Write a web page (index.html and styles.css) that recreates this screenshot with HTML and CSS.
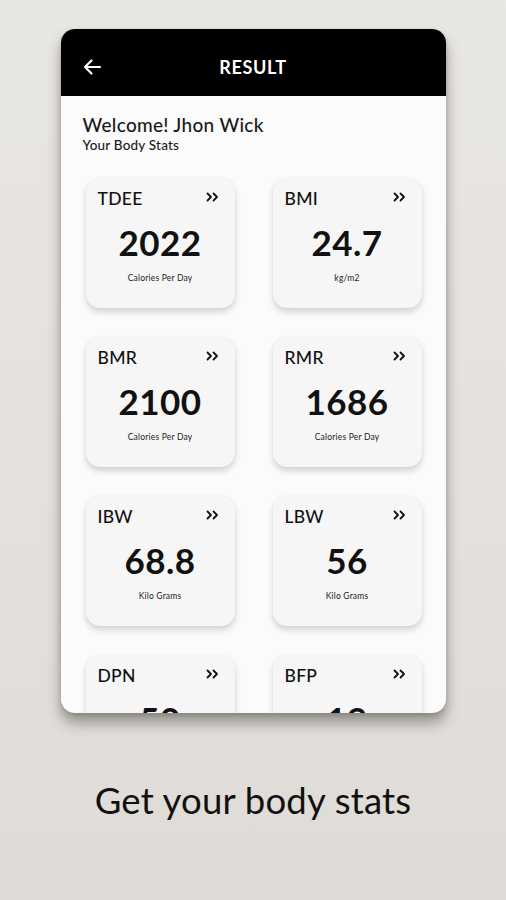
FILE: index.html
```html
<!DOCTYPE html>
<html lang="en">
<head>
<meta charset="utf-8">
<title>Result</title>
<link rel="stylesheet" href="styles.css">
</head>
<body>
<div class="screen">
  <div class="phone">
    <header class="appbar">
      <svg class="back" width="20" height="18" viewBox="0 0 20 18"><path d="M18 9H3M9.5 2.5L3 9l6.5 6.5" fill="none" stroke="#fff" stroke-width="2.2" stroke-linecap="round" stroke-linejoin="round"/></svg>
      <span class="title">RESULT</span>
    </header>
    <main class="content">
      <h1 class="welcome">Welcome! Jhon Wick</h1>
      <p class="sub">Your Body Stats</p>
      <div class="grid">
        <div class="card"><div class="top"><span class="lbl">TDEE</span><svg class="chev" width="13" height="10" viewBox="0 0 13 10"><path d="M1.5 1.5L5 5 1.5 8.5M7.5 1.5L11 5 7.5 8.5" fill="none" stroke="#111" stroke-width="1.8" stroke-linecap="round" stroke-linejoin="round"/></svg></div><div class="val">2022</div><div class="unit">Calories Per Day</div></div>
        <div class="card"><div class="top"><span class="lbl">BMI</span><svg class="chev" width="13" height="10" viewBox="0 0 13 10"><path d="M1.5 1.5L5 5 1.5 8.5M7.5 1.5L11 5 7.5 8.5" fill="none" stroke="#111" stroke-width="1.8" stroke-linecap="round" stroke-linejoin="round"/></svg></div><div class="val">24.7</div><div class="unit">kg/m2</div></div>
        <div class="card"><div class="top"><span class="lbl">BMR</span><svg class="chev" width="13" height="10" viewBox="0 0 13 10"><path d="M1.5 1.5L5 5 1.5 8.5M7.5 1.5L11 5 7.5 8.5" fill="none" stroke="#111" stroke-width="1.8" stroke-linecap="round" stroke-linejoin="round"/></svg></div><div class="val">2100</div><div class="unit">Calories Per Day</div></div>
        <div class="card"><div class="top"><span class="lbl">RMR</span><svg class="chev" width="13" height="10" viewBox="0 0 13 10"><path d="M1.5 1.5L5 5 1.5 8.5M7.5 1.5L11 5 7.5 8.5" fill="none" stroke="#111" stroke-width="1.8" stroke-linecap="round" stroke-linejoin="round"/></svg></div><div class="val">1686</div><div class="unit">Calories Per Day</div></div>
        <div class="card"><div class="top"><span class="lbl">IBW</span><svg class="chev" width="13" height="10" viewBox="0 0 13 10"><path d="M1.5 1.5L5 5 1.5 8.5M7.5 1.5L11 5 7.5 8.5" fill="none" stroke="#111" stroke-width="1.8" stroke-linecap="round" stroke-linejoin="round"/></svg></div><div class="val">68.8</div><div class="unit">Kilo Grams</div></div>
        <div class="card"><div class="top"><span class="lbl">LBW</span><svg class="chev" width="13" height="10" viewBox="0 0 13 10"><path d="M1.5 1.5L5 5 1.5 8.5M7.5 1.5L11 5 7.5 8.5" fill="none" stroke="#111" stroke-width="1.8" stroke-linecap="round" stroke-linejoin="round"/></svg></div><div class="val">56</div><div class="unit">Kilo Grams</div></div>
        <div class="card"><div class="top"><span class="lbl">DPN</span><svg class="chev" width="13" height="10" viewBox="0 0 13 10"><path d="M1.5 1.5L5 5 1.5 8.5M7.5 1.5L11 5 7.5 8.5" fill="none" stroke="#111" stroke-width="1.8" stroke-linecap="round" stroke-linejoin="round"/></svg></div><div class="val">50</div><div class="unit">Percent</div></div>
        <div class="card"><div class="top"><span class="lbl">BFP</span><svg class="chev" width="13" height="10" viewBox="0 0 13 10"><path d="M1.5 1.5L5 5 1.5 8.5M7.5 1.5L11 5 7.5 8.5" fill="none" stroke="#111" stroke-width="1.8" stroke-linecap="round" stroke-linejoin="round"/></svg></div><div class="val">19</div><div class="unit">Percent</div></div>
      </div>
    </main>
  </div>
  <p class="caption">Get your body stats</p>
</div>
</body>
</html>
```

FILE: styles.css
```css
* { box-sizing: border-box; }
html, body { margin: 0; padding: 0; }
body {
  width: 506px;
  height: 900px;
  overflow: hidden;
  background: linear-gradient(180deg, #e9e7e3 0%, #e4e1dd 60%, #dfdbd6 100%);
  font-family: Lato, "Open Sans", sans-serif;
  color: #111;
}
.screen {
  display: flex;
  flex-direction: column;
  align-items: center;
  padding-top: 29px;
}
.phone {
  width: 385px;
  height: 684px;
  border-radius: 14px;
  overflow: hidden;
  background: #fbfbfb;
  box-shadow: 0 10px 14px rgba(60, 55, 50, 0.45), 0 2px 4px rgba(0,0,0,0.15);
  display: flex;
  flex-direction: column;
}
.appbar {
  height: 67px;
  flex: none;
  background: #000;
  display: flex;
  align-items: center;
  position: relative;
  padding: 8px 0 0 21px;
}
.back { display: block; margin-top: 0; }
.title {
  position: absolute;
  left: 0;
  right: 0;
  top: 8px;
  bottom: 0;
  display: flex;
  align-items: center;
  justify-content: center;
  color: #fff;
  font-weight: 700;
  font-size: 18px;
  letter-spacing: 0.6px;
  pointer-events: none;
}
.content {
  flex: 1;
  overflow: hidden;
  padding: 18px 0 0 22px;
}
.welcome {
  margin: 0;
  font-size: 19px;
  line-height: 22px;
  font-weight: 500;
  letter-spacing: 0.3px;
  color: #1a1a1a;
}
.sub {
  margin: 0;
  font-size: 13.5px;
  line-height: 18px;
  font-weight: 500;
  letter-spacing: 0.2px;
  color: #1a1a1a;
}
.grid {
  margin: 24px 0 0 3px;
  display: grid;
  grid-template-columns: 149px 149px;
  column-gap: 38px;
  row-gap: 29px;
}
.card {
  height: 130px;
  background: #f6f6f6;
  border-radius: 14px;
  box-shadow: 0 4px 6px rgba(0,0,0,0.16), 0 0 2px rgba(0,0,0,0.06);
  padding: 11px 16px 0 12px;
  display: flex;
  flex-direction: column;
}
.top {
  display: flex;
  justify-content: space-between;
  align-items: center;
  height: 18px;
}
.lbl {
  font-size: 17.5px;
  font-weight: 500;
  letter-spacing: 0.3px;
  color: #111;
}
.chev { display: block; margin-top: -3px; }
.val {
  margin-top: 15px;
  text-align: center;
  font-size: 35px;
  line-height: 40px;
  font-weight: 700;
  letter-spacing: 0.5px;
  color: #111;
  margin-right: -4px;
}
.unit {
  margin-top: 11px;
  text-align: center;
  font-size: 8.5px;
  color: #222;
  letter-spacing: 0.2px;
  margin-right: -4px;
}
.caption {
  margin: 65px 0 0;
  font-family: Lato, "Open Sans", sans-serif;
  font-size: 36.5px;
  font-weight: 400;
  color: #111;
  letter-spacing: 0.2px;
}
```
